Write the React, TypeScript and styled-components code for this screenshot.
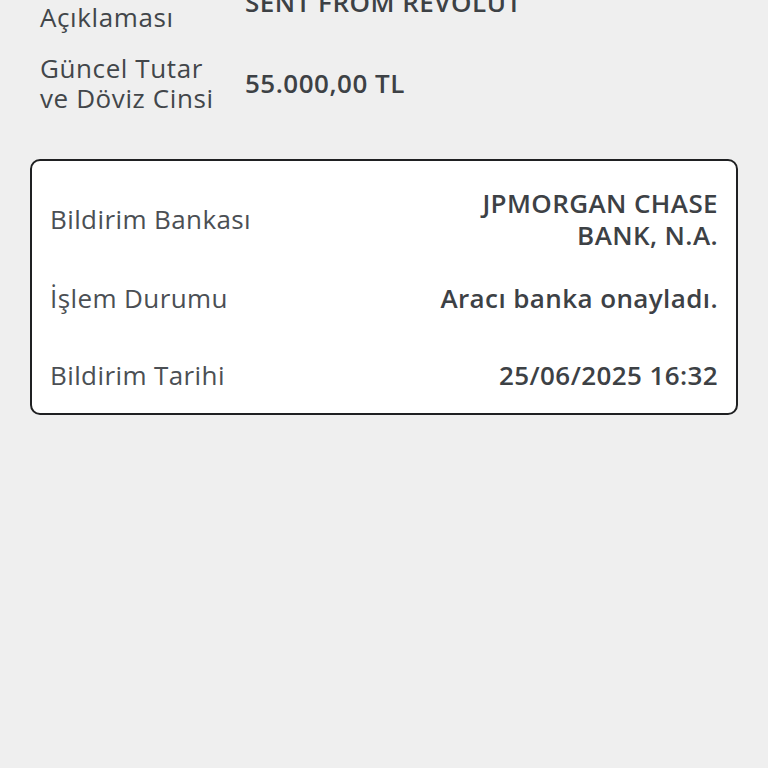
import React from "react";
import styled, { createGlobalStyle } from "styled-components";

const GlobalStyle = createGlobalStyle`
  html, body {
    margin: 0;
    padding: 0;
    background-color: #efefef;
  }
  body {
    font-family: "Open Sans", "Noto Sans", sans-serif;
    -webkit-font-smoothing: antialiased;
  }
`;

interface DetailItem {
  label: string;
  value: string;
}

const transferDetails: DetailItem[] = [
  { label: "Ödeme\nAçıklaması", value: "SENT FROM REVOLUT" },
  { label: "Güncel Tutar\nve Döviz Cinsi", value: "55.000,00 TL" },
];

const notifyDetails: DetailItem[] = [
  { label: "Bildirim Bankası", value: "JPMORGAN CHASE\nBANK, N.A." },
  { label: "İşlem Durumu", value: "Aracı banka onayladı." },
  { label: "Bildirim Tarihi", value: "25/06/2025 16:32" },
];

const App: React.FC = () => {
  return (
    <>
      <GlobalStyle />
      <Page>
        <DetailGrid>
          {transferDetails.map((item) => (
            <React.Fragment key={item.label}>
              <DetailLabel>{item.label}</DetailLabel>
              <DetailValue>{item.value}</DetailValue>
            </React.Fragment>
          ))}
        </DetailGrid>

        <StatusCard>
          {notifyDetails.map((item) => (
            <StatusRow key={item.label}>
              <StatusLabel>{item.label}</StatusLabel>
              <StatusValue>{item.value}</StatusValue>
            </StatusRow>
          ))}
        </StatusCard>
      </Page>
    </>
  );
};

const Page = styled.div`
  margin-top: -28px;
  padding: 0 30px;
  min-height: 800px;
  box-sizing: border-box;
`;

const DetailGrid = styled.div`
  display: grid;
  grid-template-columns: 205px 1fr;
  align-items: center;
  row-gap: 21px;
  padding: 0 10px;
`;

const DetailLabel = styled.div`
  font-size: 26px;
  line-height: 30px;
  letter-spacing: 0.6px;
  color: #42464a;
  white-space: pre-line;
`;

const DetailValue = styled.div`
  font-size: 26px;
  line-height: 30px;
  font-weight: 600;
  letter-spacing: 0.5px;
  color: #3d4145;
`;

const StatusCard = styled.div`
  margin-top: 46px;
  background-color: #ffffff;
  border: 2px solid #1f2022;
  border-radius: 10px;
  padding: 18px 18px 0;
`;

const StatusRow = styled.div`
  display: flex;
  align-items: center;
  justify-content: space-between;
  min-height: 79px;

  &:last-child {
    min-height: 76px;
  }
`;

const StatusLabel = styled.div`
  font-size: 26px;
  line-height: 32px;
  letter-spacing: 0.4px;
  color: #4b4f54;
`;

const StatusValue = styled.div`
  font-size: 26px;
  line-height: 32px;
  font-weight: 600;
  letter-spacing: 0.4px;
  color: #3d4145;
  text-align: right;
  white-space: pre-line;
`;

export default App;
